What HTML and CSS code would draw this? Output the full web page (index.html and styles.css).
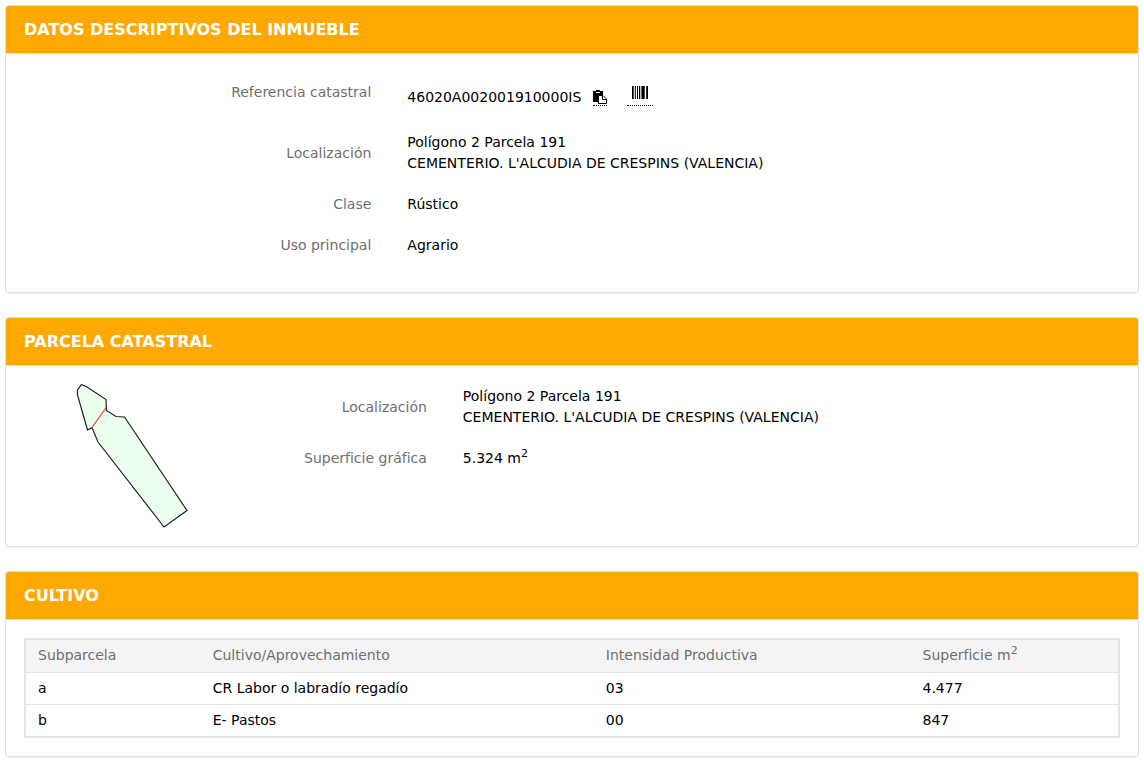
FILE: index.html
```html
<!DOCTYPE html>
<html lang="es">
<head>
    <meta charset="UTF-8">
    <meta name="viewport" content="width=device-width, initial-scale=1.0">
    <title>Datos del inmueble</title>
    <link rel="stylesheet" href="styles.css">
</head>
<body>
    <section class="panel">
        <h2 class="panel-heading">DATOS DESCRIPTIVOS DEL INMUEBLE</h2>
        <div class="panel-body">
            <dl class="datos">
                <div class="fila fila-ref">
                    <dt>Referencia catastral</dt>
                    <dd>
                        <span class="ref">46020A002001910000IS</span>
                        <a href="#" class="icono copiar" aria-label="Copiar referencia">
                            <svg width="14" height="14" viewBox="0 0 14 14">
                                <path d="M0 1h3V0h4v1h3v4H6v7H0z" fill="#000"/>
                                <path d="M3 2.500h4" stroke="#fff" fill="none"/>
                                <path d="M5.500 5.500h4.500l3.500 3.500v4.500h-8z" fill="#fff" stroke="#000"/>
                                <path d="M9.500 5.500v4h4" fill="none" stroke="#000"/>
                            </svg>
                        </a>
                        <a href="#" class="icono barras" aria-label="Código de barras">
                            <svg width="16" height="13" viewBox="0 0 16 13">
                                <path d="M0 0h1.700v13H0zM2.800 0h1v13h-1zM5 0h1v13H5zM7 0h1.200v13H7zM9.400 0h3.300v13H9.400zM14.200 0H16v13h-1.800z" fill="#000"/>
                            </svg>
                        </a>
                    </dd>
                </div>
                <div class="fila">
                    <dt>Localización</dt>
                    <dd>Polígono 2 Parcela 191<br>CEMENTERIO. L'ALCUDIA DE CRESPINS (VALENCIA)</dd>
                </div>
                <div class="fila">
                    <dt>Clase</dt>
                    <dd>Rústico</dd>
                </div>
                <div class="fila">
                    <dt>Uso principal</dt>
                    <dd>Agrario</dd>
                </div>
            </dl>
        </div>
    </section>

    <section class="panel">
        <h2 class="panel-heading">PARCELA CATASTRAL</h2>
        <div class="panel-body parcela">
            <div class="croquis">
                <svg width="112" height="144" viewBox="76 384 112 144" role="img" aria-label="Croquis de la parcela">
                    <path d="M81.500 384.500L87 387L106 399.500L106.500 410.500L116 416.500L124.500 417L187 510.500L164 527L98 442L92 427.500L87.500 430L77.500 395L77.500 390Z" fill="#ebffee" stroke="#222" stroke-width="1.200"/>
                    <path d="M106.500 407L92 427.500" stroke="#f33" stroke-width="1.200" fill="none"/>
                </svg>
            </div>
            <dl class="datos">
                <div class="fila">
                    <dt>Localización</dt>
                    <dd>Polígono 2 Parcela 191<br>CEMENTERIO. L'ALCUDIA DE CRESPINS (VALENCIA)</dd>
                </div>
                <div class="fila">
                    <dt>Superficie gráfica</dt>
                    <dd>5.324 m<sup>2</sup></dd>
                </div>
            </dl>
        </div>
    </section>

    <section class="panel">
        <h2 class="panel-heading">CULTIVO</h2>
        <div class="panel-body">
            <table class="tabla">
                <thead>
                    <tr>
                        <th class="col-sub">Subparcela</th>
                        <th class="col-cultivo">Cultivo/Aprovechamiento</th>
                        <th class="col-intensidad">Intensidad Productiva</th>
                        <th>Superficie m<sup>2</sup></th>
                    </tr>
                </thead>
                <tbody>
                    <tr>
                        <td>a</td>
                        <td>CR Labor o labradío regadío</td>
                        <td>03</td>
                        <td>4.477</td>
                    </tr>
                    <tr>
                        <td>b</td>
                        <td>E- Pastos</td>
                        <td>00</td>
                        <td>847</td>
                    </tr>
                </tbody>
            </table>
        </div>
    </section>
</body>
</html>
```
FILE: styles.css
```css
* {
    margin: 0;
    padding: 0;
    box-sizing: border-box;
}

body {
    padding: 5px;
    font-family: Verdana, "DejaVu Sans", sans-serif;
    font-size: 14px;
    line-height: 21px;
    color: #000;
    background-color: #fff;
}

.panel {
    margin-bottom: 24px;
    border: 1px solid #ddd;
    border-radius: 4px;
    box-shadow: 0 1px 1px rgba(0, 0, 0, 0.05);
    overflow: hidden;
}

.panel-heading {
    padding: 13px 18px 12px;
    border-bottom: 1px solid #ddd;
    background-color: #ffa800;
    color: #fff;
    font-size: 16px;
    font-weight: bold;
    line-height: 22px;
}

.panel-body {
    padding: 18px;
}

/* etiqueta a la derecha, valor a la izquierda */
.datos {
    margin-bottom: 8px;
}

.fila {
    display: grid;
    grid-template-columns: 1fr 2fr;
    align-items: center;
    padding: 10px 0;
}

.fila-ref {
    align-items: start;
}

.fila dt {
    padding-right: 18px;
    text-align: right;
    color: #6f6f6f;
}

.fila dd {
    padding-left: 18px;
}

.fila-ref dd {
    display: flex;
    align-items: flex-end;
    height: 30px;
    padding-bottom: 6px;
}

.ref {
    line-height: 17px;
}

.icono {
    display: flex;
    justify-content: center;
    border-bottom: 1px dotted #000;
}

.copiar {
    margin-left: 12px;
    padding-bottom: 1px;
}

.barras {
    width: 26px;
    margin-left: 20px;
    padding-bottom: 6px;
}

sup {
    font-size: 11px;
    line-height: 0;
}

.parcela {
    display: grid;
    grid-template-columns: 20% 1fr;
    padding-top: 10px;
}

.parcela .fila {
    grid-template-columns: 23% 1fr;
}

.croquis {
    display: flex;
    justify-content: center;
    padding: 8px 4px 0 0;
}

.tabla {
    width: 100%;
    border: 2px solid #e4e4e4;
    border-collapse: separate;
    border-spacing: 0;
}

.tabla th,
.tabla td {
    padding: 5px 12px;
    text-align: left;
}

.tabla th {
    padding-bottom: 6px;
    background-color: #f4f4f4;
    color: #6f6f6f;
    font-weight: normal;
}

.tabla td {
    border-top: 1px solid #e4e4e4;
}

.col-sub {
    width: 16%;
}

.col-cultivo {
    width: 36%;
}

.col-intensidad {
    width: 29%;
}
```
